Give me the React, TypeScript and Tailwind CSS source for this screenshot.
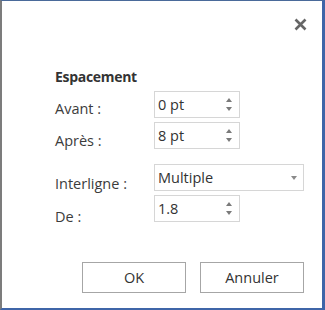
import React from "react";

const Spinner: React.FC = () => (
  <div className="flex flex-col items-center gap-[5px] mr-[7px]">
    <svg width="6" height="4" viewBox="0 0 6 4">
      <path d="M0 4 L3 0 L6 4 Z" fill="#7a7a7a" />
    </svg>
    <svg width="6" height="4" viewBox="0 0 6 4">
      <path d="M0 0 L3 4 L6 0 Z" fill="#7a7a7a" />
    </svg>
  </div>
);

const NumberField: React.FC<{ value: string }> = ({ value }) => (
  <div className="w-[86px] h-[27px] border border-[#d6d6d6] bg-white flex items-center justify-between pl-[3px]">
    <span className="text-[14.5px] text-[#333]">{value}</span>
    <Spinner />
  </div>
);

const Row: React.FC<{ label: string; offset: string; children: React.ReactNode }> = ({
  label,
  offset,
  children,
}) => (
  <div className="flex items-start h-[27px]">
    <div className={`w-[99px] shrink-0 text-[14.5px] leading-[20px] text-[#3c3c3c] ${offset}`}>{label}</div>
    {children}
  </div>
);

const App: React.FC = () => {
  return (
    <div
      className="w-[325px] h-[310px] bg-white border-t border-t-[#4a6a9a] border-l-2 border-l-[#7c7c7c] border-r-[3px] border-r-[#3f65a8] border-b-2 border-b-[#3f65a8] flex flex-col"
      style={{ fontFamily: '"Open Sans", "Noto Sans", sans-serif' }}
    >
      <div className="flex justify-end pt-[17px] pr-[15px]">
        <svg width="13" height="13" viewBox="0 0 13 13">
          <path d="M1.5 1.5 L11.5 11.5 M11.5 1.5 L1.5 11.5" stroke="#666" strokeWidth="2.6" />
        </svg>
      </div>

      <div className="pl-[53px] pt-[37px]">
        <div className="text-[14px] leading-[18px] font-bold tracking-[-0.3px] text-[#333]">
          Espacement
        </div>

        <div className="mt-[5px] flex flex-col gap-[4px]">
          <Row label="Avant :" offset="mt-[8px]">
            <NumberField value="0 pt" />
          </Row>
          <Row label="Après :" offset="mt-[9px]">
            <NumberField value="8 pt" />
          </Row>
        </div>

        <div className="mt-[15px] flex flex-col gap-[4px]">
          <Row label="Interligne :" offset="mt-[10px]">
            <div className="w-[150px] h-[27px] border border-[#d6d6d6] bg-white flex items-center justify-between pl-[3px] pr-[6px]">
              <span className="text-[14.5px] text-[#333]">Multiple</span>
              <svg width="6" height="4" viewBox="0 0 6 4">
                <path d="M0 0 L3 4 L6 0 Z" fill="#8a8a8a" />
              </svg>
            </div>
          </Row>
          <Row label="De :" offset="mt-[12px]">
            <NumberField value="1.8" />
          </Row>
        </div>
      </div>

      <div className="flex justify-end gap-[14px] pr-[18px] mt-[40px]">
        <button className="w-[104px] h-[31px] border border-[#a6a6a6] bg-white text-[14.5px] text-[#333]">
          OK
        </button>
        <button className="w-[104px] h-[31px] border border-[#a6a6a6] bg-white text-[14.5px] text-[#333]">
          Annuler
        </button>
      </div>
    </div>
  );
};

export default App;
